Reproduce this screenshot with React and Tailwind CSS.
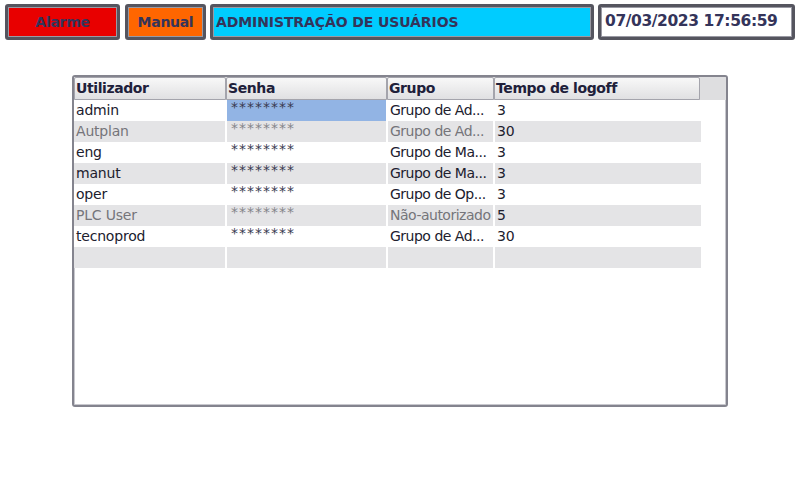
import React from "react";

const users = [
  { name: "admin", group: "Grupo de Ad...", time: "3", selected: true },
  { name: "Autplan", group: "Grupo de Ad...", time: "30", dim: true },
  { name: "eng", group: "Grupo de Ma...", time: "3" },
  { name: "manut", group: "Grupo de Ma...", time: "3" },
  { name: "oper", group: "Grupo de Op...", time: "3" },
  { name: "PLC User", group: "Não-autorizado", time: "5", dim: true },
  { name: "tecnoprod", group: "Grupo de Ad...", time: "30" },
  { name: "", group: "", time: "", empty: true },
];

const font = { fontFamily: '"DejaVu Sans", Tahoma, sans-serif' };

function TopBox({ className, children }) {
  return (
    <div
      className={`h-[36px] border-[3px] border-[#55555f] rounded-[3px] shadow-[inset_0_0_0_1px_#9a9aa4] flex items-center font-bold text-[14px] text-[#34345a] ${className}`}
    >
      {children}
    </div>
  );
}

const App = () => {
  return (
    <div className="w-[799px] h-[480px] bg-white overflow-hidden" style={font}>
      <div className="flex pt-[4px] pl-[5px]">
        <TopBox className="w-[115px] bg-[#e80000] justify-center tracking-[-0.3px]">Alarme</TopBox>
        <TopBox className="w-[81px] ml-[5px] bg-[#ff6600] justify-center tracking-[-0.3px]">Manual</TopBox>
        <TopBox className="w-[384px] ml-[4px] bg-[#00ccff] pl-[3px] tracking-[-0.1px]">ADMINISTRAÇÃO DE USUÁRIOS</TopBox>
        <TopBox className="w-[197px] ml-[4px] bg-white pl-[4px] text-[15.5px] tracking-[-0.4px]">07/03/2023 17:56:59</TopBox>
      </div>

      <div className="ml-[72px] mt-[35px] w-[656px] h-[332px] border-2 border-[#84848e] rounded-[3px] shadow-[inset_0_0_0_1px_#c8c8ce] bg-white overflow-hidden">
        <div className="flex h-[23px] bg-[#dedee0]">
          {["Utilizador", "Senha", "Grupo", "Tempo de logoff"].map((h, i) => (
            <div
              key={h}
              className={`h-[23px] border border-[#a4a4ac] rounded-t-[2px] bg-gradient-to-b from-[#f8f8f8] to-[#e0e0e2] font-bold text-[14px] text-[#20203a] tracking-[-0.4px] pl-[1px] leading-[21px] ${
                ["w-[152px]", "w-[161px]", "w-[107px]", "w-[206px]"][i]
              }`}
            >
              {h}
            </div>
          ))}
        </div>
        <div>
          {users.map((u, i) => {
            const bg = i % 2 === 1 ? "bg-[#e4e4e6]" : "bg-white";
            const txt = u.dim ? "text-[#75757a]" : "text-[#20202e]";
            return (
              <div key={i} className={`flex gap-[2px] h-[21px] text-[14px] leading-[20px] tracking-[-0.2px] ${txt}`}>
                <div className={`w-[151px] pl-[2px] ${bg}`}>{u.name}</div>
                <div
                  className={`w-[159px] pl-[4px] text-[14px] leading-[15px] tracking-[1px] ${
                    u.selected ? "bg-[#92b4e4]" : bg
                  } ${u.dim ? "text-[#85858a]" : "text-[#3a3a50]"}`}
                >
                  {u.empty ? "" : "********"}
                </div>
                <div className={`w-[105px] pl-[2px] whitespace-nowrap tracking-[-0.5px] ${bg}`}>{u.group}</div>
                <div className={`w-[206px] pl-[2px] text-[#20202e] ${bg}`}>{u.time}</div>
              </div>
            );
          })}
        </div>
      </div>
    </div>
  );
};

export default App;
